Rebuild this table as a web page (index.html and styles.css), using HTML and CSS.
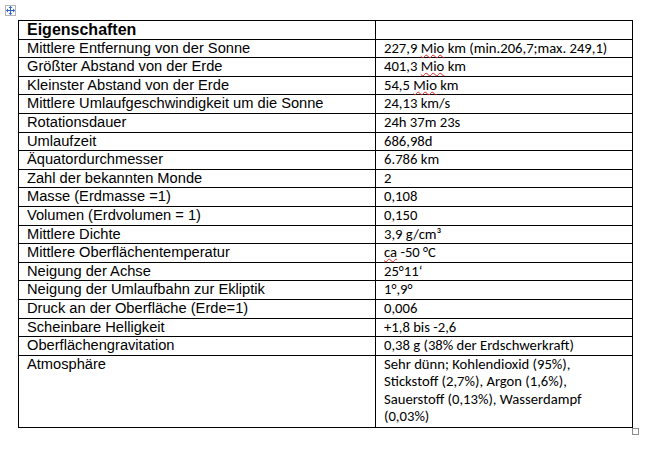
FILE: index.html
```html
<!DOCTYPE html>
<html lang="de">
<head>
<meta charset="utf-8">
<title>Eigenschaften</title>
<link rel="stylesheet" href="styles.css">
</head>
<body>
<div class="page">
  <div class="move-handle">
    <svg width="9" height="9" viewBox="0 0 9 9" aria-hidden="true">
      <path d="M4.5 0.5 L4.5 8.5 M0.5 4.5 L8.5 4.5" stroke="#2f63c4" stroke-width="1" fill="none"/>
      <path d="M4.5 0 L2.5 2 L6.5 2 Z M4.5 9 L2.5 7 L6.5 7 Z M0 4.5 L2 2.5 L2 6.5 Z M9 4.5 L7 2.5 L7 6.5 Z" fill="#2f63c4"/>
    </svg>
  </div>
  <table class="props">
    <colgroup><col class="c1"><col class="c2"></colgroup>
    <tr><td class="k head">Eigenschaften</td><td class="v"></td></tr>
    <tr><td class="k">Mittlere Entfernung von der Sonne</td><td class="v">227,9 <span class="spell">Mio</span> km (min.206,7;max. 249,1)</td></tr>
    <tr><td class="k">Größter Abstand von der Erde</td><td class="v">401,3 <span class="spell">Mio</span> km</td></tr>
    <tr><td class="k">Kleinster Abstand von der Erde</td><td class="v">54,5 <span class="spell">Mio</span> km</td></tr>
    <tr><td class="k">Mittlere Umlaufgeschwindigkeit um die Sonne</td><td class="v">24,13 km/s</td></tr>
    <tr><td class="k">Rotationsdauer</td><td class="v">24h 37m 23s</td></tr>
    <tr><td class="k">Umlaufzeit</td><td class="v">686,98d</td></tr>
    <tr><td class="k">Äquatordurchmesser</td><td class="v">6.786 km</td></tr>
    <tr><td class="k">Zahl der bekannten Monde</td><td class="v">2</td></tr>
    <tr><td class="k">Masse (Erdmasse =1)</td><td class="v">0,108</td></tr>
    <tr><td class="k">Volumen (Erdvolumen = 1)</td><td class="v">0,150</td></tr>
    <tr><td class="k">Mittlere Dichte</td><td class="v">3,9 g/cm³</td></tr>
    <tr><td class="k">Mittlere Oberflächentemperatur</td><td class="v"><span class="spell">ca</span> -50 °C</td></tr>
    <tr><td class="k">Neigung der Achse</td><td class="v">25°11‘</td></tr>
    <tr><td class="k">Neigung der Umlaufbahn zur Ekliptik</td><td class="v">1°,9°</td></tr>
    <tr><td class="k">Druck an der Oberfläche (Erde=1)</td><td class="v">0,006</td></tr>
    <tr><td class="k">Scheinbare Helligkeit</td><td class="v">+1,8 bis -2,6</td></tr>
    <tr><td class="k">Oberflächengravitation</td><td class="v">0,38 g (38% der Erdschwerkraft)</td></tr>
    <tr class="tall"><td class="k">Atmosphäre</td><td class="v multi">Sehr dünn; Kohlendioxid (95%),<br>Stickstoff (2,7%), Argon (1,6%),<br>Sauerstoff (0,13%), Wasserdampf<br>(0,03%)</td></tr>
  </table>
  <div class="resize-handle"></div>
</div>
</body>
</html>
```

FILE: styles.css
```css
html, body {
  margin: 0;
  padding: 0;
  background: #ffffff;
}

.page {
  position: relative;
  width: 658px;
  height: 450px;
  padding: 20px 0 0 18px;
  box-sizing: border-box;
}

.move-handle {
  position: absolute;
  left: 5px;
  top: 5px;
  width: 9px;
  height: 9px;
  border: 1px solid #b4b4b4;
  background: #ffffff;
  display: flex;
  align-items: center;
  justify-content: center;
}

.move-handle svg {
  display: block;
}

.resize-handle {
  position: absolute;
  left: 632px;
  top: 428px;
  width: 5px;
  height: 5px;
  border: 1px solid #8c8c8c;
  background: #ffffff;
}

.props {
  border-collapse: collapse;
  table-layout: fixed;
  width: 615px;
}

.props col.c1 {
  width: 357px;
}

.props tr {
  height: 18.6px;
}

.props tr.tall {
  height: 72px;
}

.props td {
  border: 1px solid #000000;
  padding: 0 8px;
  vertical-align: top;
  color: #000000;
  white-space: nowrap;
}

.props td.k {
  font-family: "Liberation Sans", Arial, sans-serif;
  font-size: 14.67px;
  line-height: 17px;
}

.props td.head {
  font-size: 16px;
  font-weight: bold;
  line-height: 17px;
}

.props td.v {
  font-family: Carlito, Calibri, Lato, sans-serif;
  font-size: 14.67px;
  line-height: 16px;
}

.props td.multi {
  line-height: 17.5px;
}

.spell {
  text-decoration-line: underline;
  text-decoration-style: wavy;
  text-decoration-color: #e02020;
  text-decoration-thickness: 1px;
  text-underline-offset: 1px;
}
```
